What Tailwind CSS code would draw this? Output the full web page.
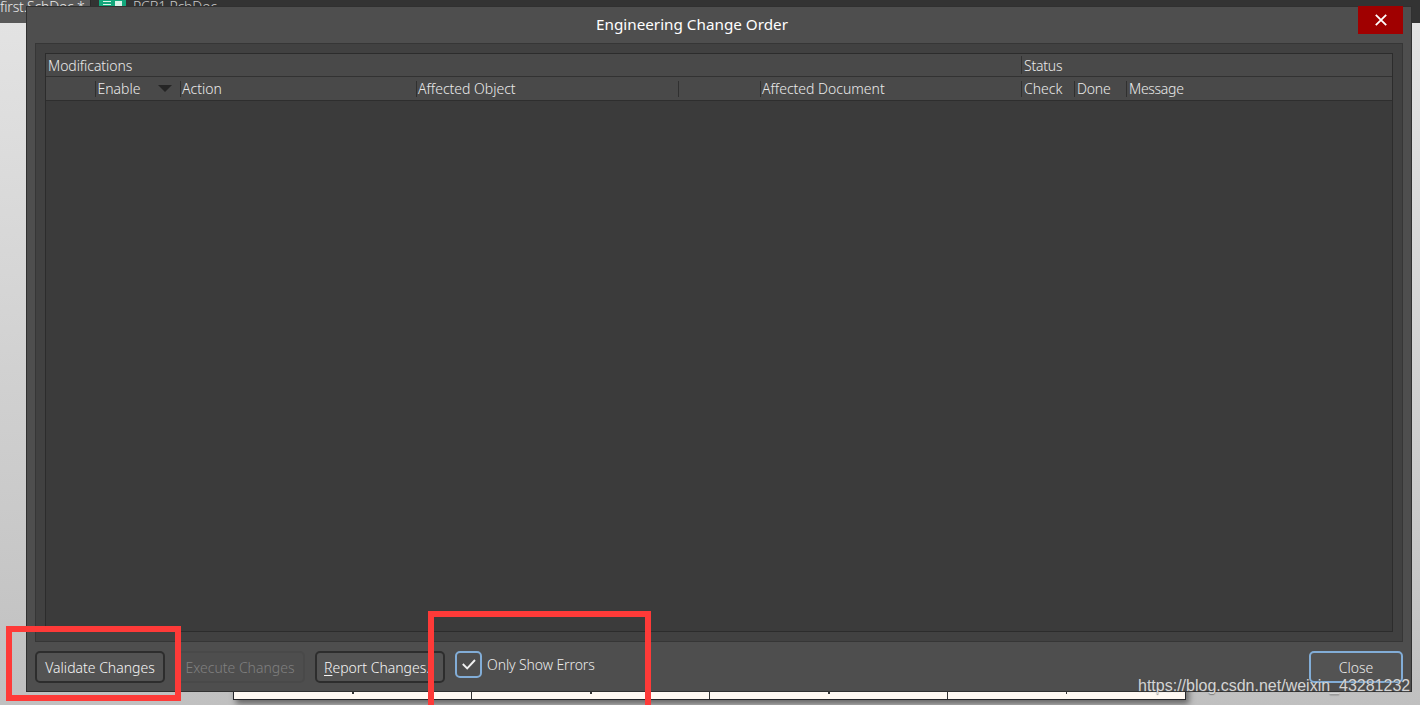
<!DOCTYPE html>
<html lang="en">
<head>
<meta charset="utf-8">
<title>Engineering Change Order</title>
<script src="https://cdn.jsdelivr.net/npm/@tailwindcss/browser@4"></script>
</head>
<body class="relative h-[705px] w-[1420px] overflow-hidden bg-linear-to-b from-[#e4e4e4] to-[#c0c0c0] font-['Noto_Sans','Open_Sans',sans-serif] text-[14px] leading-5 font-light text-[#ebebeb]">
  <!-- editor tabs behind the dialog -->
  <div class="flex h-[23px] overflow-hidden bg-[#333333]">
    <div class="h-[23px] w-[91px] border-r border-[#292929] bg-[#585858] whitespace-nowrap"><span class="relative -top-[3px] tracking-[-0.15px]">first.SchDoc *</span></div>
    <svg class="ml-2 h-3 w-[27px]" viewBox="0 0 27 12"><path fill="#12a77b" d="M0 0h27v12H0z"/><path fill="#d8f3e8" d="M16 1h7v5h-7zM4 1h8v1H4zM4 4h8v1H4z"/></svg>
    <span class="relative -top-[3px] ml-[7px] tracking-[-0.15px] text-[#c8c8c8]">PCB1.PcbDoc</span>
  </div>

  <!-- schematic sheet edge -->
  <div class="absolute left-[233px] top-[680px] flex h-[20px] w-[953px] border border-[#26262a] bg-[#fff9f3] shadow-[3px_4px_6px_#666]">
    <div class="flex w-[238px] items-end justify-center border-r border-[#333] pb-[5px]"><i class="h-[2px] w-[2px] bg-[#333]"></i></div>
    <div class="flex w-[238px] items-end justify-center border-r border-[#333] pb-[5px]"><i class="h-[2px] w-[2px] bg-[#333]"></i></div>
    <div class="flex w-[238px] items-end justify-center border-r border-[#333] pb-[5px]"><i class="h-[2px] w-[2px] bg-[#333]"></i></div>
    <div class="flex flex-1 items-end justify-center pb-[5px]"><i class="h-[2px] w-px bg-[#333]"></i></div>
  </div>

  <!-- dialog -->
  <main class="absolute left-[26px] top-[6px] flex h-[686px] w-[1386px] flex-col border border-[#303030] bg-[#4e4e4e] px-2">
    <header class="relative flex h-9 shrink-0 pl-[561px] pt-[7px]">
      <h1 class="text-[15.25px] font-normal whitespace-nowrap text-white">Engineering Change Order</h1>
      <button class="absolute -top-px right-0 flex h-7 w-[45px] items-center justify-center bg-[#a00000]"><svg class="size-3" viewBox="0 0 12 12" stroke="#fff" stroke-width="1.8"><path d="M.8.8l10.4 10.4M11.2.8L.8 11.2"/></svg></button>
    </header>
    <section class="h-[599px] shrink-0 border border-[#363636] bg-[#414141] p-[9px]">
      <div class="h-[579px] border border-[#2c2c2c] bg-[#3b3b3b]">
        <div class="flex h-[23px] border-b border-[#323232] bg-[#494949] pt-[2px]">
          <div class="w-[975px] pl-[2px] tracking-[-0.07px]">Modifications</div>
          <div class="h-[18px] border-l border-[#323232] pl-[2px] tracking-[-0.2px]">Status</div>
        </div>
        <div class="flex h-6 items-center border-b border-[#2e2e2e] bg-[#494949] whitespace-nowrap *:h-4 *:leading-[16px] *:border-[#303030]">
          <div class="w-[49px]"></div>
          <div class="flex w-[85px] items-center border-l pl-[1.5px]">Enable<svg class="ml-[17.5px] h-[7px] w-[14px]" viewBox="0 0 14 7"><path fill="#252525" d="M0 0h14L7 7z"/></svg></div>
          <div class="w-[236px] border-l pl-[1px]">Action</div>
          <div class="w-[262px] border-l pl-[1px]">Affected Object</div>
          <div class="w-[82px] border-l"></div>
          <div class="w-[261px] border-l pl-[1px]">Affected Document</div>
          <div class="w-[53px] border-l pl-[2px]">Check</div>
          <div class="w-[52px] border-l pl-[2px] tracking-[-0.2px]">Done</div>
          <div class="border-l pl-[2px] tracking-[-0.3px]">Message</div>
        </div>
      </div>
    </section>
    <footer class="flex pt-[9px] whitespace-nowrap">
      <button class="h-8 w-[130px] rounded-[5px] border-2 border-[#2d2d2d] bg-[#535353] pt-px text-[#f6f6f6]">Validate Changes</button>
      <button class="ml-[10px] h-8 w-[130px] rounded-[5px] border-2 border-[#494949] bg-[#4e4e4e] pt-px text-[#808080]">Execute Changes</button>
      <button class="ml-[10px] h-8 w-[130px] rounded-[5px] border-2 border-[#2d2d2d] bg-[#535353] pl-[7px] pt-px text-left text-[#f6f6f6]"><span class="underline decoration-1 underline-offset-2">R</span>eport Changes..</button>
      <span class="ml-[10px] flex size-[27px] items-center justify-center rounded-[5px] border-2 border-[#82add7] bg-[#4e4e4e]"><svg class="h-[11px] w-[14px]" viewBox="0 0 14 11" fill="none" stroke="#f0f0f0" stroke-width="1.9"><path d="M.8 5L5.2 9.4L13 1"/></svg></span>
      <span class="ml-[5px] pt-[4px] tracking-[-0.1px]">Only Show Errors</span>
      <button class="ml-auto h-8 w-[94px] rounded-[5px] border-2 border-[#82add7] bg-[#535353] pt-px">Close</button>
    </footer>
  </main>

  <!-- callout frames -->
  <div class="absolute left-[6px] top-[626px] h-[75px] w-[175px] border-6 border-[#fe3a38]"></div>
  <div class="absolute left-[428px] top-[611px] h-[110px] w-[223px] border-6 border-[#fe3a38]"></div>
  <p class="absolute left-[1138px] top-[676px] font-['Liberation_Sans',sans-serif] text-[16px] font-normal whitespace-nowrap text-[#d4d4d4] [text-shadow:0_1px_1px_#555a]">https://blog.csdn.net/weixin_43281232</p>
</body>
</html>
